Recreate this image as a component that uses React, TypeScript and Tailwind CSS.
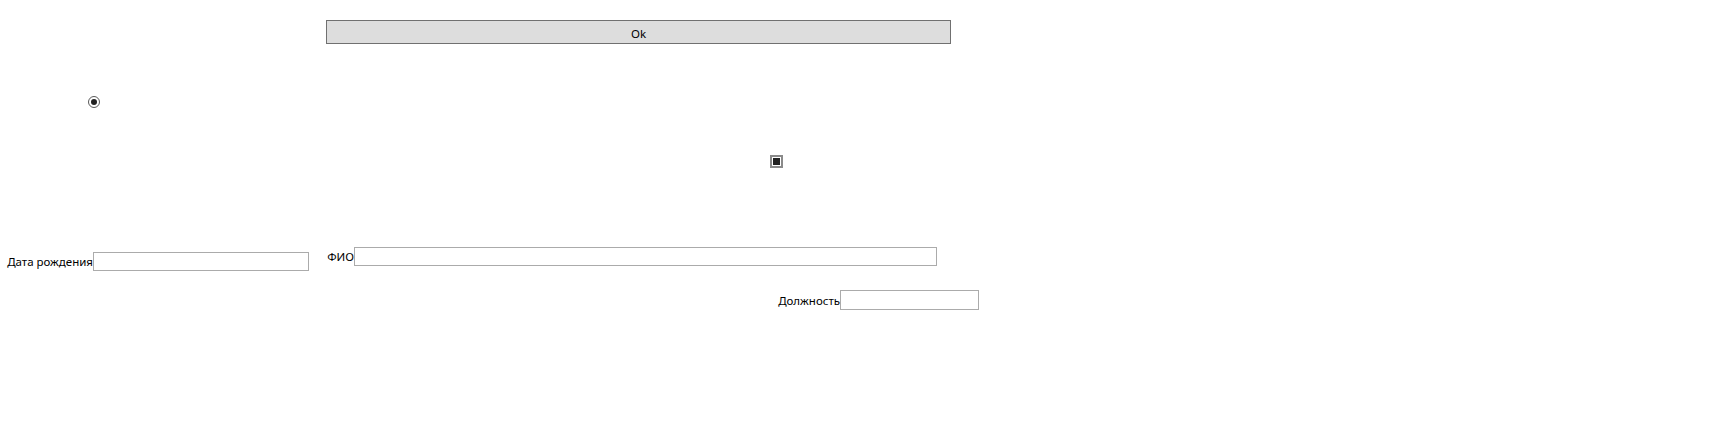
import React from 'react';

const Field: React.FC<{ label: string; labelWidth: string; inputClass: string }> = ({ label, labelWidth, inputClass }) => (
  <div className="flex items-center">
    <span className={`${labelWidth} text-right whitespace-nowrap leading-none pt-[1px]`}>{label}</span>
    <input type="text" className={`${inputClass} border border-[#ababab] bg-white outline-none`} />
  </div>
);

export default function App() {
  return (
    <div className="w-[1712px] h-[424px] bg-white text-black text-[11.5px] font-['Segoe_UI','Noto_Sans',sans-serif] overflow-hidden">
      <div className="pt-[20px] pl-[326px]">
        <button className="w-[625px] h-[24px] border border-[#707070] bg-[#dddddd] text-[11.5px] leading-none pt-[3px]">Ok</button>
      </div>

      <div className="mt-[52px] ml-[88px]">
        <div className="w-[12px] h-[12px] rounded-full border border-[#5a5a5a] flex items-center justify-center">
          <div className="w-[6px] h-[6px] rounded-full bg-[#222222]" />
        </div>
      </div>

      <div className="mt-[47px] ml-[770px]">
        <div className="w-[13px] h-[13px] border-2 border-[#8a8a8a] flex items-center justify-center">
          <div className="w-[7px] h-[7px] bg-[#222222]" />
        </div>
      </div>

      <div className="mt-[79px] flex items-start">
        <div className="w-[309px] mt-[5px] flex justify-end">
          <Field label="Дата рождения" labelWidth="w-[93px]" inputClass="w-[216px] h-[19px]" />
        </div>
        <Field label="ФИО" labelWidth="w-[45px]" inputClass="w-[583px] h-[19px]" />
      </div>

      <div className="mt-[19px] ml-[740px]">
        <Field label="Должность" labelWidth="w-[100px]" inputClass="w-[139px] h-[20px]" />
      </div>
    </div>
  );
}
